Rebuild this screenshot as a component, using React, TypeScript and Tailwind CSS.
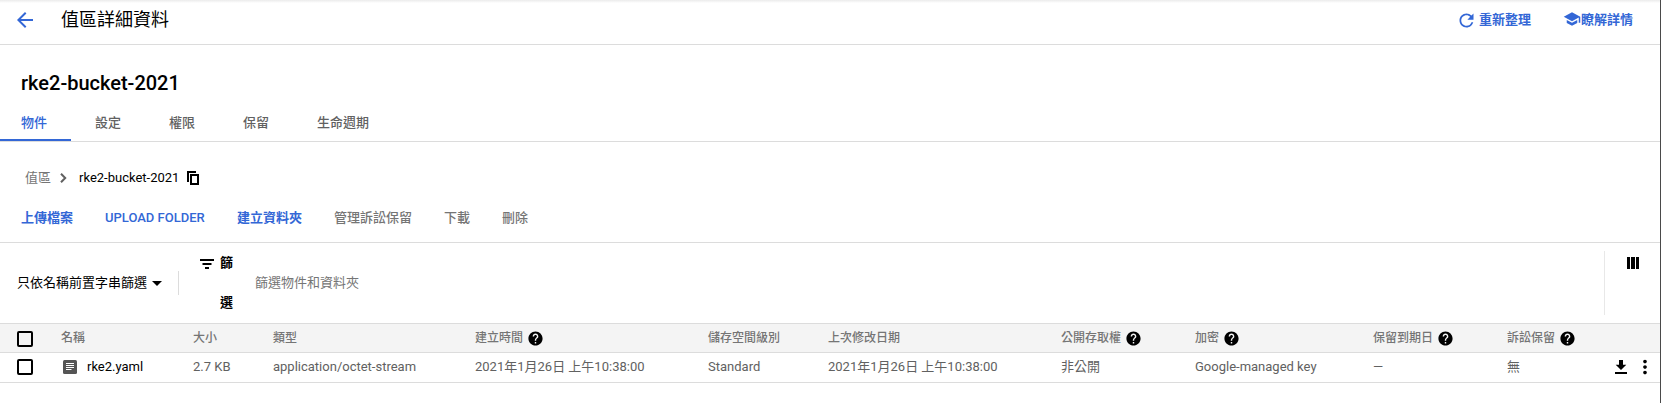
import React from "react";
import {
  MdArrowBack,
  MdRefresh,
  MdSchool,
  MdArrowDropDown,
  MdHelp,
  MdMoreVert,
} from "react-icons/md";

type Column = { label: string; value: string; width: string; help?: boolean };

const tabs = ["物件", "設定", "權限", "保留", "生命週期"];

const actions = [
  { label: "上傳檔案", style: "w-[84px] font-bold text-[#3367d6]" },
  { label: "UPLOAD FOLDER", style: "w-[132px] font-medium text-[#3367d6]" },
  { label: "建立資料夾", style: "w-[97px] font-bold text-[#3367d6]" },
  { label: "管理訴訟保留", style: "w-[110px] font-medium text-[#757575]" },
  { label: "下載", style: "w-[58px] font-medium text-[#757575]" },
  { label: "刪除", style: "w-[58px] font-medium text-[#757575]" },
];

const columns: Column[] = [
  { label: "大小", value: "2.7 KB", width: "w-[80px]" },
  { label: "類型", value: "application/octet-stream", width: "w-[202px]" },
  { label: "建立時間", value: "2021年1月26日 上午10:38:00", width: "w-[233px]", help: true },
  { label: "儲存空間級別", value: "Standard", width: "w-[120px]" },
  { label: "上次修改日期", value: "2021年1月26日 上午10:38:00", width: "w-[233px]" },
  { label: "公開存取權", value: "非公開", width: "w-[134px]", help: true },
  { label: "加密", value: "Google-managed key", width: "w-[178px]", help: true },
  { label: "保留到期日", value: "—", width: "w-[134px]", help: true },
  { label: "訴訟保留", value: "無", width: "w-[108px]", help: true },
];

function Checkbox() {
  return <span className="block size-4 shrink-0 rounded-[2px] border-2 border-black" />;
}

function Chevron() {
  return (
    <svg viewBox="0 0 7 10" className="mx-[9px] h-[10px] w-[7px]">
      <path d="M1 .8L5.2 5 1 9.2" fill="none" stroke="#616161" strokeWidth="2" />
    </svg>
  );
}

function CopyIcon() {
  return (
    <svg viewBox="0 0 12 14" className="ml-[8px] h-3.5 w-3">
      <path d="M1 11V1h8M4 4h7v9H4z" fill="none" stroke="#000" strokeWidth="2" />
    </svg>
  );
}

function FilterIcon() {
  return (
    <svg viewBox="0 0 14 10" className="mt-[16px] mr-1.5 h-[10px] w-3.5">
      <path d="M0 0h14v2H0zM2.5 4h9v2h-9zM5 8h4v2H5z" />
    </svg>
  );
}

function FileIcon() {
  return (
    <svg viewBox="0 0 14 14" className="size-3.5 shrink-0">
      <rect width="14" height="14" rx="1.5" fill="#555" />
      <path d="M3 3.5h8M3 5.5h8M3 7.5h8M3 9.5h5.5" stroke="#fff" strokeWidth="1" />
    </svg>
  );
}

function DownloadIcon() {
  return (
    <svg viewBox="0 0 12 14" className="h-3.5 w-3 shrink-0">
      <path d="M4 0h4v4.7h3.3L6 10 .7 4.7H4zM0 12h12v2H0z" />
    </svg>
  );
}

export default function App() {
  return (
    <div className="flex h-[403px] w-full flex-col overflow-hidden border-r border-[#4a4a4a] bg-white font-[Roboto,'Noto_Sans_CJK_TC',sans-serif] text-[13px] leading-5 whitespace-nowrap text-black">
      <div className="h-[3px] shrink-0 bg-linear-to-b from-[#ebebeb] to-white" />
      <header className="flex h-[42px] shrink-0 items-center border-b border-[#dcdcdc] pb-[7px] pl-[13px] text-[#3367d6]">
        <MdArrowBack className="size-6" />
        <h1 className="ml-6 text-[18px] text-black">值區詳細資料</h1>
        <div className="mr-[27px] ml-auto flex items-center font-bold">
          <MdRefresh className="mr-[2px] size-[21px]" />
          <span className="mr-[32px]">重新整理</span>
          <MdSchool className="mb-[3px] size-[18px]" />
          <span>瞭解詳情</span>
        </div>
      </header>

      <h2 className="h-[59px] shrink-0 pt-7 pl-[21px] text-[20px] font-medium">rke2-bucket-2021</h2>
      <nav className="flex h-[38px] shrink-0 border-b border-[#dcdcdc] font-medium text-[#616161]">
        {tabs.map((tab, i) => (
          <div
            key={tab}
            className={
              i === 0
                ? "w-[71px] border-b-2 border-[#3367d6] pt-[9px] pl-[21px] text-[#3367d6]"
                : "px-6 pt-[9px]"
            }
          >
            {tab}
          </div>
        ))}
      </nav>

      <div className="flex h-[52px] shrink-0 items-center pt-[19px] pl-[25px]">
        <span className="text-[#757575]">值區</span>
        <Chevron />
        <span className="ml-[3px]">rke2-bucket-2021</span>
        <CopyIcon />
      </div>
      <div className="flex h-[49px] shrink-0 border-b border-[#dcdcdc] pt-[14px] pl-[21px]">
        {actions.map((a) => (
          <span key={a.label} className={`shrink-0 ${a.style}`}>
            {a.label}
          </span>
        ))}
      </div>

      <div className="flex h-[80px] shrink-0 items-center">
        <span className="w-[130px] pb-px pl-[17px]">只依名稱前置字串篩選</span>
        <MdArrowDropDown className="ml-[15px] size-6" />
        <span className="ml-[9px] h-6 w-px bg-[#dcdcdc]" />
        <div className="ml-[21px] flex h-20 items-start font-bold">
          <FilterIcon />
          <span className="w-[13px] leading-10 whitespace-normal">篩選</span>
        </div>
        <span className="ml-[22px] pb-px text-[#757575]">篩選物件和資料夾</span>
        <div className="ml-auto flex h-16 w-14 border-l border-[#e8e8e8] pt-1.5 pl-[22px]">
          <svg viewBox="0 0 12 12" className="size-3">
            <path d="M0 0h3v12H0zM4 0h4v12H4zM9 0h3v12H9z" />
          </svg>
        </div>
      </div>

      <div className="flex h-[30px] shrink-0 items-center border-y border-[#dcdcdc] bg-[#f4f4f4] pl-[17px] text-[12px] font-medium text-[#757575]">
        <span className="pt-px text-black">
          <Checkbox />
        </span>
        <span className="ml-7 w-[132px] shrink-0">名稱</span>
        {columns.map((c) => (
          <span key={c.label} className={`flex shrink-0 items-center ${c.width}`}>
            {c.label}
            {c.help && <MdHelp className="ml-1 size-[17px] text-black" />}
          </span>
        ))}
      </div>
      <div className="flex h-[30px] shrink-0 items-center border-b border-[#dcdcdc] pb-[2px] pl-[17px] text-[#616161]">
        <span className="text-black">
          <Checkbox />
        </span>
        <span className="ml-[30px] flex w-[130px] shrink-0 items-center gap-[10px] text-black">
          <FileIcon />
          rke2.yaml
        </span>
        {columns.map((c) => (
          <span key={c.label} className={`shrink-0 ${c.width}`}>
            {c.value}
          </span>
        ))}
        <span className="flex items-center text-black">
          <DownloadIcon />
          <MdMoreVert className="ml-[7px] size-[22px]" />
        </span>
      </div>
    </div>
  );
}
